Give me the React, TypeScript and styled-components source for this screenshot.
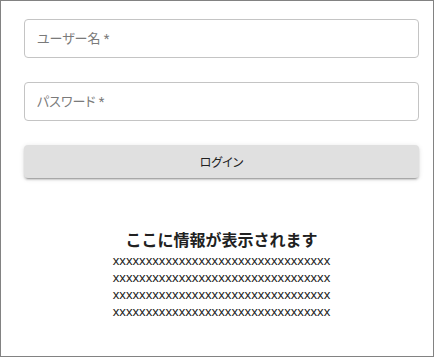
import styled, { createGlobalStyle } from 'styled-components'

const GlobalStyle = createGlobalStyle`
  html, body {
    margin: 0;
    padding: 0;
    background: #ffffff;
  }
  body {
    font-family: Roboto, "Noto Sans CJK JP", sans-serif;
  }
`

const Frame = styled.div`
  box-sizing: border-box;
  width: 434px;
  height: 357px;
  border: 1px solid #828282;
  padding: 18px 0 0 23px;
`

const Form = styled.form`
  width: 395px;
  display: flex;
  flex-direction: column;
  gap: 24px;
`

const Field = styled.input`
  box-sizing: border-box;
  width: 100%;
  height: 39px;
  margin: 0;
  padding: 0 12px;
  border: 1px solid #c4c4c4;
  border-radius: 4px;
  background: #ffffff;
  font-family: Roboto, "Noto Sans CJK JP", sans-serif;
  font-size: 13px;
  font-feature-settings: 'palt';
  color: #212121;
  outline: none;

  &::placeholder {
    color: #7a7a7a;
    opacity: 1;
  }
`

const Button = styled.button`
  box-sizing: border-box;
  width: 100%;
  height: 33px;
  border: none;
  border-radius: 4px;
  background: #e0e0e0;
  box-shadow: 0 3px 1px -2px rgba(0, 0, 0, 0.2), 0 2px 2px 0 rgba(0, 0, 0, 0.14),
    0 1px 5px 0 rgba(0, 0, 0, 0.12);
  font-family: Roboto, "Noto Sans CJK JP", sans-serif;
  font-size: 12px;
  font-feature-settings: 'palt';
  color: #212121;
  cursor: pointer;
`

const Info = styled.section`
  width: 395px;
  margin-top: 49px;
  display: flex;
  flex-direction: column;
  align-items: center;
`

const InfoTitle = styled.h2`
  margin: 0;
  font-family: "Noto Sans CJK JP", sans-serif;
  font-size: 16px;
  font-weight: 700;
  line-height: 24px;
  color: #212121;
`

const InfoBody = styled.p`
  margin: 1px 0 0;
  width: 222px;
  font-family: "Liberation Sans", Arial, sans-serif;
  font-size: 13.2px;
  line-height: 17px;
  color: #212121;
  word-break: break-all;
  text-align: center;
`

export default function App() {
  const filler = 'x'.repeat(132)

  return (
    <>
      <GlobalStyle />
      <Frame>
        <Form onSubmit={(e) => e.preventDefault()}>
          <Field type="text" placeholder="ユーザー名 *" />
          <Field type="password" placeholder="パスワード *" />
          <Button type="submit">ログイン</Button>
        </Form>
        <Info>
          <InfoTitle>ここに情報が表示されます</InfoTitle>
          <InfoBody>{filler}</InfoBody>
        </Info>
      </Frame>
    </>
  )
}
